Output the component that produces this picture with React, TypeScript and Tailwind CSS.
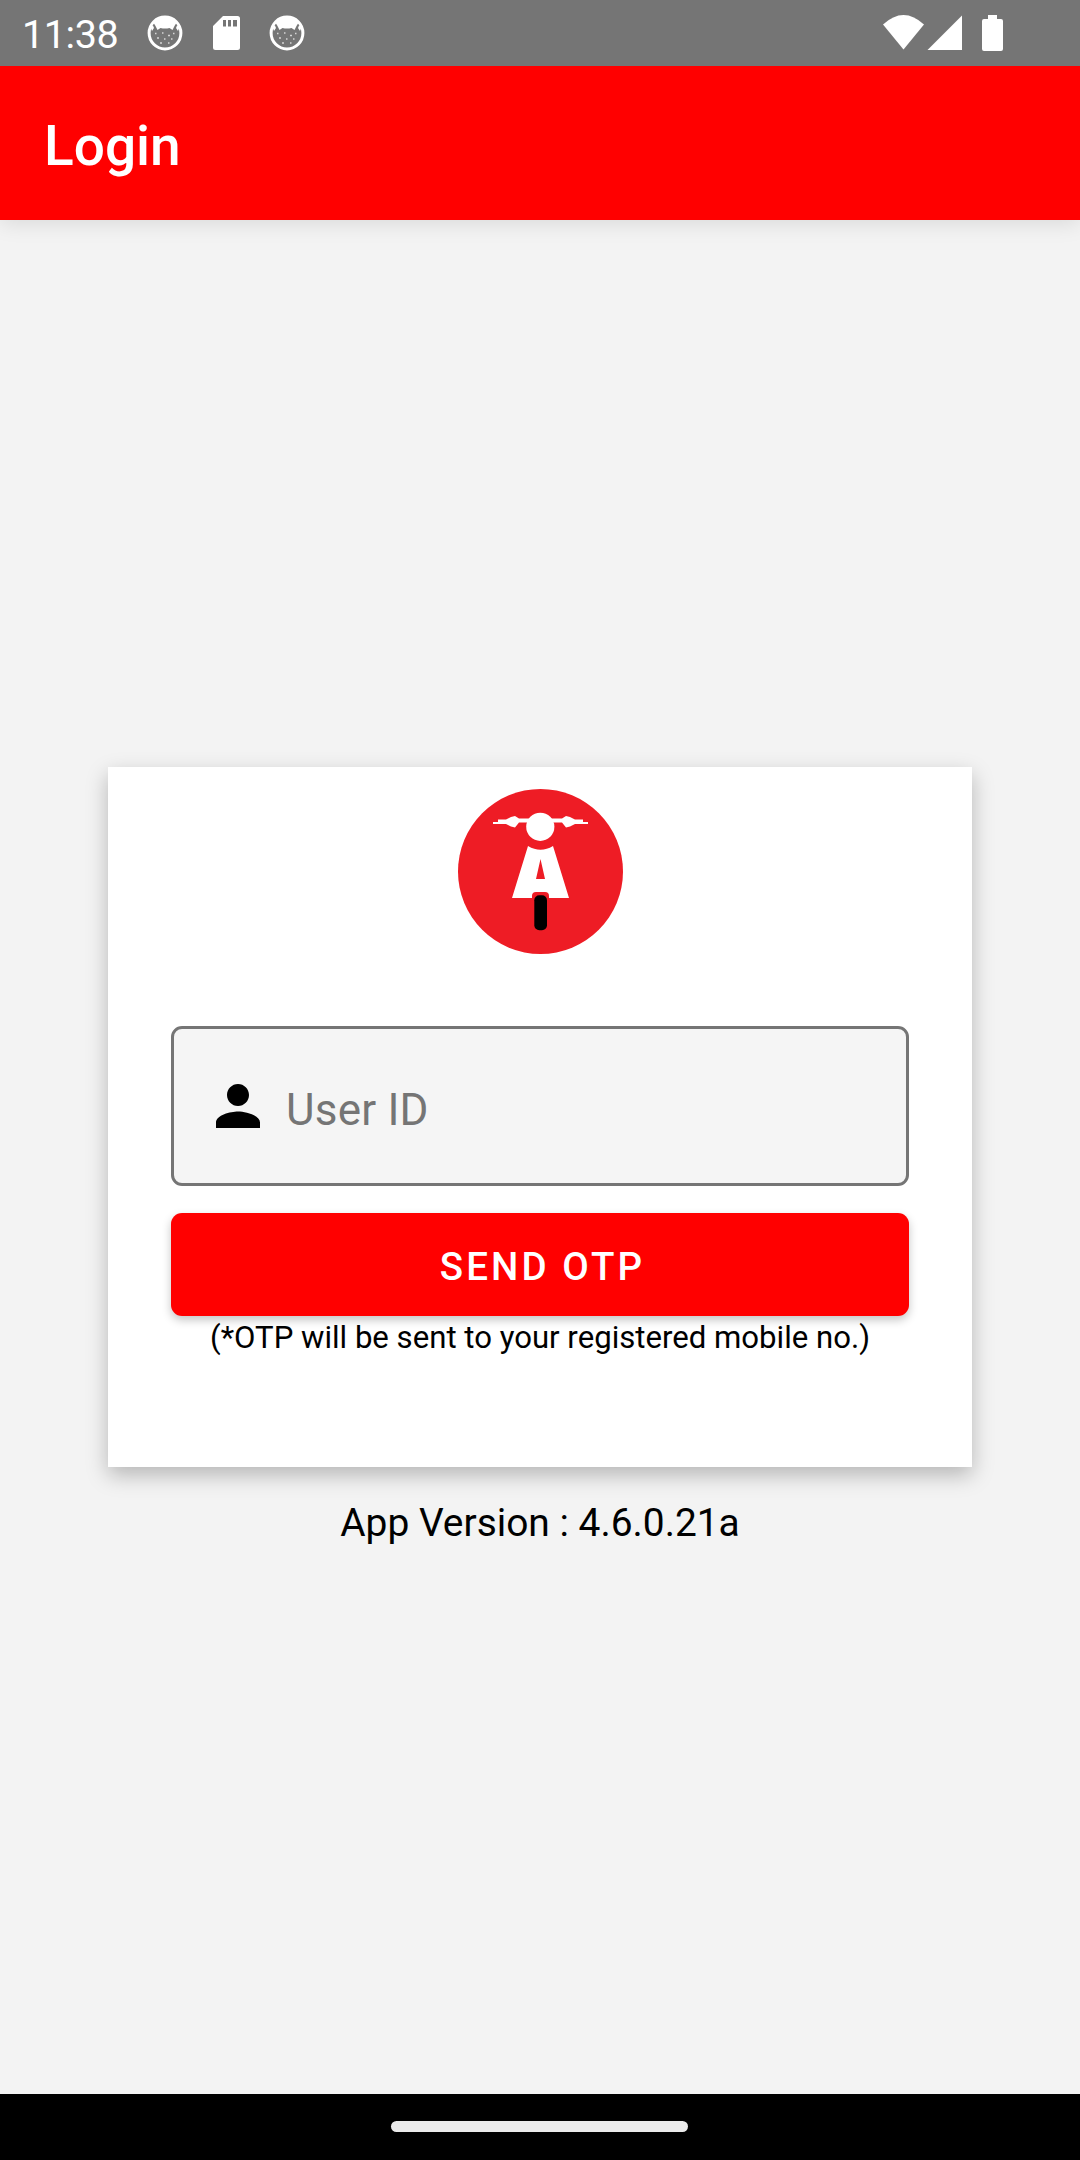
function DebugIcon() {
  return (
    <svg className="h-[36px] w-[36px]" viewBox="0 0 36 36" fill="none">
      <circle cx="18" cy="18" r="15.9" stroke="#fff" strokeWidth="3" />
      <path d="M6 7Q18 -3 30 7L27.500 11L25.500 15L22.500 13Q18 14 13.500 13L10.500 15L8.500 11Z" fill="#fff" />
      <path d="M3 11L6 10.500L7 13L5 16ZM33 11L30 10.500L29 13L31 16Z" fill="#fff" />
      <path d="M8 18.500h1.500M15 18h1.500M26 18.500h1.500M10 23h2M21 20.500h2M17 24h1.500M24 24h1.500M13 28h2M21 28h1.500" stroke="#fff" strokeOpacity=".7" strokeWidth="1.300" />
    </svg>
  );
}

function SdCard() {
  return (
    <svg className="-mr-px h-[34px] w-[27px]" viewBox="0 0 27 34">
      <path fill="#fff" fillRule="evenodd" d="M10 0H24.5Q27 0 27 2.5V31.5Q27 34 24.5 34H2.5Q0 34 0 31.5V10ZM10 4V10.5H13V4ZM15 4V10.5H18V4ZM20 4V10.5H24V4Z" />
    </svg>
  );
}

function StatusBar() {
  return (
    <div className="relative z-20 flex h-[66px] items-center bg-[#757575] pl-[22px] text-white">
      <span className="w-[96px] whitespace-nowrap pt-[3px] text-[39.5px] leading-none tracking-[-0.4px]">11:38</span>
      <div className="ml-[29px] flex items-center gap-[30px]">
        <DebugIcon />
        <SdCard />
        <DebugIcon />
      </div>
      <svg className="ml-auto mr-[76px] h-[36px] w-[121px]" viewBox="0 0 121 36" fill="#fff">
        <path d="M0 9.5Q20.5 -9.5 41 9.5L20.5 34.5Z" />
        <path d="M79 .5V35H44.5Z" />
        <path d="M105 0H114V4H118Q120 4 120 6V34Q120 36 118 36H101Q99 36 99 34V6Q99 4 101 4H105Z" />
      </svg>
    </div>
  );
}

function Logo() {
  return (
    <svg className="h-[165px] w-[165px]" viewBox="0 0 165 165">
      <circle cx="82.5" cy="82.5" r="82.5" fill="#ee1c25" />
      <g fill="#fff">
        <circle cx="82.3" cy="37.8" r="14.1" />
        <path d="M35 33H40V30.500H48L53 28L57 27L61 29.500H104L108 27L112 28L117 30.500H125V33H130V35H117L112 37.500L108 38.500L104 33.500H61L57 38.500L53 37.500L48 35H35Z" />
        <path fillRule="evenodd" d="M70 57Q82.500 64.500 95 57L111 109H91V107Q91 103 87 103H78Q74 103 74 107V109H54ZM82.500 70L78 90H87Z" />
      </g>
      <rect x="76.300" y="106.300" width="12.700" height="35" rx="5" />
    </svg>
  );
}

export default function App() {
  return (
    <div className="flex h-[2160px] w-[1080px] flex-col bg-[#f3f3f3] font-['Roboto',sans-serif] text-black">
      <StatusBar />
      <header className="z-10 flex h-[154px] items-center bg-[#ff0000] pl-[44px] pt-[6px] text-[55px] font-medium leading-none text-white shadow-[0_4px_20px_rgba(0,0,0,0.1)]">
        Login
      </header>
      <main className="flex flex-1 flex-col items-center pt-[547px]">
        <section className="flex h-[700px] w-[864px] flex-col items-center bg-white px-[63px] pt-[22px] shadow-[0_8px_20px_rgba(0,0,0,0.25)]">
          <Logo />
          <label className="mt-[72px] flex h-[160px] w-full items-center rounded-[11px] border-[3px] border-[#757575] bg-[#f5f5f5] pl-[42px]">
            <svg className="h-[44px] w-[44px]" viewBox="4 4 16 16">
              <path d="M12 12c2.210 0 4-1.790 4-4s-1.790-4-4-4-4 1.790-4 4 1.790 4 4 4zm0 2c-2.670 0-8 1.340-8 4v2h16v-2c0-2.660-5.330-4-8-4z" />
            </svg>
            <span className="ml-[26px] pt-[8px] text-[44px] leading-none tracking-[0.2px] text-[#757575]">User ID</span>
          </label>
          <button className="mt-[27px] flex h-[103px] w-full items-center justify-center rounded-[11px] bg-[#ff0000] pl-[5px] pt-[5px] text-[38.5px] font-medium leading-none tracking-[3.1px] text-white shadow-[0_4px_10px_rgba(0,0,0,0.23)]">
            SEND OTP
          </button>
          <p className="mt-[4px] whitespace-nowrap text-[31.15px] leading-[36px]">(*OTP will be sent to your registered mobile no.)</p>
        </section>
        <p className="mt-[33px] whitespace-nowrap text-[38.9px] leading-[46px]">App Version : 4.6.0.21a</p>
      </main>
      <footer className="flex h-[66px] items-center justify-center bg-black pb-px pr-px">
        <div className="h-[11px] w-[297px] rounded-full bg-[#ebebeb]" />
      </footer>
    </div>
  );
}
